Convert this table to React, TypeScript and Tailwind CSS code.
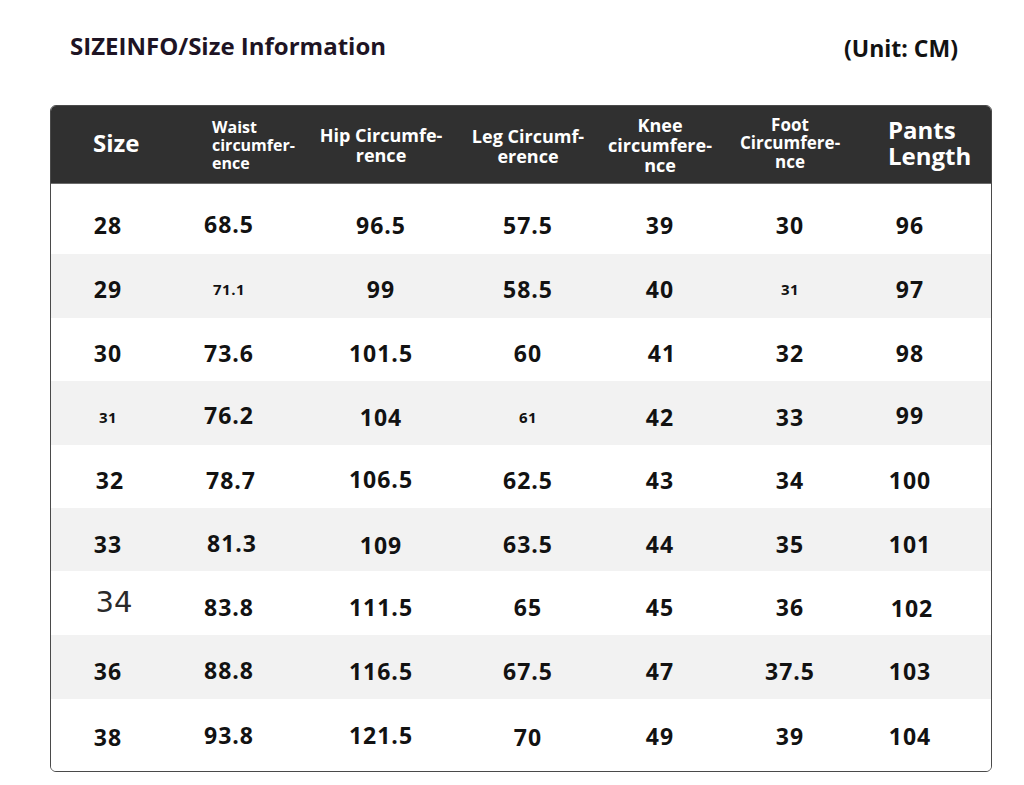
type Cell = { t: string; k?: "sm" | "lg"; p?: boolean; dy?: number; dx?: number };

const rows: Cell[][] = [
  [{ t: "28" }, { t: "68.5", dy: -1 }, { t: "96.5" }, { t: "57.5", p: true }, { t: "39" }, { t: "30" }, { t: "96" }],
  [{ t: "29" }, { t: "71.1", k: "sm" }, { t: "99" }, { t: "58.5" }, { t: "40" }, { t: "31", k: "sm" }, { t: "97" }],
  [{ t: "30" }, { t: "73.6", p: true }, { t: "101.5" }, { t: "60" }, { t: "41", dx: 2 }, { t: "32" }, { t: "98" }],
  [{ t: "31", k: "sm" }, { t: "76.2", p: true, dy: -2 }, { t: "104" }, { t: "61", k: "sm" }, { t: "42" }, { t: "33" }, { t: "99", dy: -2 }],
  [{ t: "32", p: true, dx: 2 }, { t: "78.7", dx: 2 }, { t: "106.5", dy: -1 }, { t: "62.5", p: true }, { t: "43" }, { t: "34" }, { t: "100" }],
  [{ t: "33" }, { t: "81.3", dy: -1, dx: 3 }, { t: "109", dy: 1 }, { t: "63.5", p: true }, { t: "44" }, { t: "35" }, { t: "101" }],
  [{ t: "34", k: "lg", dy: -4, dx: 6 }, { t: "83.8", p: true }, { t: "111.5" }, { t: "65" }, { t: "45" }, { t: "36" }, { t: "102", dy: 1, dx: 2 }],
  [{ t: "36" }, { t: "88.8", dy: -1 }, { t: "116.5" }, { t: "67.5" }, { t: "47" }, { t: "37.5", p: true }, { t: "103" }],
  [{ t: "38", dy: 1 }, { t: "93.8", dy: -1 }, { t: "121.5", p: true, dy: -1 }, { t: "70", dy: 1 }, { t: "49" }, { t: "39" }, { t: "104" }],
];

const rowBox = [
  "h-[70px] pt-[12px] bg-white",
  "h-[64px] pt-[6px] bg-[#f2f2f2]",
  "h-[63px] pt-[7px] bg-white",
  "h-[64px] pt-[8px] bg-[#f2f2f2]",
  "h-[63px] pt-[7px] bg-white",
  "h-[63px] pt-[9px] bg-[#f2f2f2]",
  "h-[64px] pt-[8px] bg-white",
  "h-[64px] pt-[8px] bg-[#f2f2f2]",
  "h-[72px] pt-[2px] bg-white",
];

const cols = "grid grid-cols-[114px_128px_176px_118px_146px_114px_126px] items-center";

function Value({ c }: { c: Cell }) {
  let cls = "text-[23px] font-bold tracking-[1px] text-[#121212]";
  if (c.k === "sm") cls = "text-[15px] font-bold tracking-[0.5px] text-[#121212]";
  if (c.k === "lg") cls = "text-[29px] font-normal text-[#2a2a2a] [font-family:'DejaVu_Sans',sans-serif]";
  if (c.p) cls += " text-[#1d0f2c]";
  const move = c.dy || c.dx ? { transform: `translate(${c.dx ?? 0}px, ${c.dy ?? 0}px)` } : undefined;
  return (
    <span className={cls} style={move}>
      {c.t}
    </span>
  );
}

export default function App() {
  return (
    <div className="h-[785px] w-[1024px] bg-white text-[#121212] [font-family:'Open_Sans',sans-serif]">
      <div className="flex items-center justify-between pl-[70px] pr-[66px] pt-[31px]">
        <h1 className="text-[24px] font-bold leading-[30px] text-[#1e1424]">SIZEINFO/Size Information</h1>
        <div className="relative top-[2px] text-[23px] font-bold leading-[30px]">(Unit: CM)</div>
      </div>

      <div className="ml-[50px] mt-[44px] w-[942px] overflow-hidden rounded-[6px] border border-[#4a4a4a]">
        <div className={`${cols} h-[78px] border-b border-[#6b6b6b] bg-[#303030] font-bold text-white`}>
          <div className="relative -top-[2px] pl-[42px] text-[24px]">Size</div>
          <div className="pl-[47px] text-[16px] leading-[18px]">
            Waist
            <br />
            circumfer-
            <br />
            ence
          </div>
          <div className="text-center text-[18px] leading-[20px]">
            Hip Circumfe-
            <br />
            rence
          </div>
          <div className="pt-[2px] text-center text-[18px] leading-[20px]">
            Leg Circumf-
            <br />
            erence
          </div>
          <div className="text-center text-[18px] leading-[20px]">
            Knee
            <br />
            circumfere-
            <br />
            nce
          </div>
          <div className="relative -top-[1px] text-center text-[17px] leading-[18.5px]">
            Foot
            <br />
            Circumfere-
            <br />
            nce
          </div>
          <div className="relative -top-[2px] pl-[41px] text-[24px] leading-[26px]">
            Pants
            <br />
            Length
          </div>
        </div>

        {rows.map((r, i) => (
          <div key={i} className={`${cols} ${rowBox[i]}`}>
            {r.map((c, j) => (
              <div key={j} className="flex justify-center">
                <Value c={c} />
              </div>
            ))}
          </div>
        ))}
      </div>
    </div>
  );
}
